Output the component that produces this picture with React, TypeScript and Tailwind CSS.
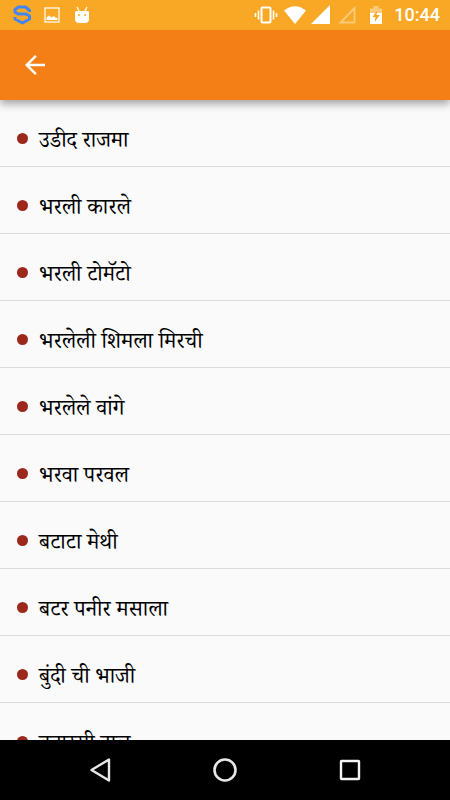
const dishes = [
  "उडीद राजमा",
  "भरली कारले",
  "भरली टोमॅटो",
  "भरलेली शिमला मिरची",
  "भरलेले वांगे",
  "भरवा परवल",
  "बटाटा मेथी",
  "बटर पनीर मसाला",
  "बुंदी ची भाजी",
  "बनारसी दाल",
];

const StatusBar = () => {
  return (
    <div className="relative z-10 flex h-[30px] shrink-0 items-center justify-between bg-[#f9a825] pr-[10px] pl-3 text-white">
      <div className="flex items-center gap-3">
        <svg className="h-5 w-5" viewBox="0 0 20 20" fill="none" stroke="#4285f4">
          <path
            d="M17.500 7V5.500L13.500 2H6.500L3 4.500V7L6 9H14L17.500 11V14L10.500 18L3 14V12"
            strokeWidth="3"
            strokeLinejoin="round"
          />
        </svg>
        <svg className="h-[16px] w-[16px]" viewBox="0 0 16 16" fill="none">
          <rect x="1" y="1" width="14" height="14" stroke="#fff" strokeOpacity="0.85" strokeWidth="1.400" />
          <path d="M2.500 13V10.500L5 8.500L7.500 10.500L9.500 9L11.500 10.500L13.500 11V13Z" fill="#fff" />
        </svg>
        <svg className="ml-[2px] h-[18px] w-4" viewBox="0 0 16 18" fill="#fff">
          <path d="M3 1L5 5M13 1L11 5" stroke="#fff" strokeWidth="1.200" />
          <path d="M1 6Q1 5 3 5H13Q15 5 15 6V13Q15 17 11 17H5Q1 17 1 13Z" />
          <circle cx="5" cy="9" r="1" fill="#f9a825" />
          <circle cx="11" cy="9" r="1" fill="#f9a825" />
        </svg>
      </div>
      <div className="flex items-center">
        <svg className="h-5 w-6" viewBox="0 0 24 20" fill="none" stroke="#fff">
          <rect x="7.500" y="2.500" width="9" height="15" rx="1" strokeWidth="2" />
          <path d="M4.500 5.500V14.500M19.500 5.500V14.500" strokeWidth="1.600" />
          <path d="M1.500 8V12M22.500 8V12" strokeWidth="1.600" />
        </svg>
        <svg className="ml-[6px] h-5 w-[22px]" viewBox="0 0 22 20" fill="#fff">
          <path d="M0 5.500Q11 -3 22 5.500L11 19Z" />
        </svg>
        <svg className="ml-[5px] h-5 w-[19px]" viewBox="0 0 19 20" fill="#fff">
          <path d="M19 0V19H0Z" />
        </svg>
        <svg className="ml-2 h-5 w-[18px]" viewBox="0 0 18 20" fill="none" stroke="#fff" strokeOpacity="0.4">
          <path d="M16.500 3V17.500H2.500Z" strokeWidth="1.800" />
        </svg>
        <svg className="ml-[14px] h-5 w-3" viewBox="0 0 12 20" fill="#fff">
          <path d="M0 3.500H3.500V1H8.500V3.500H12V8H0Z" opacity="0.4" />
          <path d="M0 8H12V19H0Z" />
          <path d="M7.500 5L2.500 12H5.500L4.500 17L10 10H6.500Z" fill="#f9a825" />
        </svg>
        <span className="ml-3 font-['Roboto',sans-serif] text-[18px] leading-[30px] font-medium">10:44</span>
      </div>
    </div>
  );
};

const Header = () => {
  return (
    <header className="relative flex h-[70px] shrink-0 items-center bg-[#f57f17] pl-5 shadow-[0_4px_8px_rgba(0,0,0,0.35)]">
      <button type="button" aria-label="Back" className="flex h-[30px] w-[30px] items-center justify-center">
        <svg className="h-[30px] w-[30px]" viewBox="0 0 24 24" fill="#fff">
          <path d="M20 11H7.830l5.590-5.590L12 4l-8 8 8 8 1.410-1.410L7.830 13H20v-2z" />
        </svg>
      </button>
    </header>
  );
};

const DishList = () => {
  return (
    <ul className="min-h-0 flex-1 overflow-hidden">
      {dishes.map((dish) => (
        <li key={dish} className="flex h-[67px] items-center border-b border-[#dadada] pt-[11px] pl-[17px]">
          <span className="h-[11px] w-[11px] shrink-0 rounded-full bg-[#9c281b]" />
          <span className="ml-[11px] pt-[10px] font-['Noto_Serif_Devanagari','Lohit_Devanagari','Noto_Sans',sans-serif] text-[22px] leading-6 text-black">
            {dish}
          </span>
        </li>
      ))}
    </ul>
  );
};

const NavigationBar = () => {
  return (
    <nav className="flex h-[60px] shrink-0 items-center justify-center gap-[95px] bg-black">
      <button type="button" aria-label="Back">
        <svg className="h-[30px] w-[30px]" viewBox="0 0 30 30" fill="none" stroke="#e8e8e8">
          <path d="M24 4.500V25.500L6.500 15Z" strokeWidth="2.400" strokeLinejoin="round" />
        </svg>
      </button>
      <button type="button" aria-label="Home">
        <svg className="h-[30px] w-[30px]" viewBox="0 0 30 30" fill="none" stroke="#e8e8e8">
          <circle cx="15" cy="15" r="10.500" strokeWidth="2.600" />
        </svg>
      </button>
      <button type="button" aria-label="Recent apps">
        <svg className="h-[30px] w-[30px]" viewBox="0 0 30 30" fill="none" stroke="#f4f4f4">
          <rect x="6" y="6" width="18" height="18" rx="0.500" strokeWidth="2.400" />
        </svg>
      </button>
    </nav>
  );
};

const App = () => {
  return (
    <div className="flex h-screen w-full flex-col bg-[#fafafa]">
      <StatusBar />
      <Header />
      <DishList />
      <NavigationBar />
    </div>
  );
};

export default App;
